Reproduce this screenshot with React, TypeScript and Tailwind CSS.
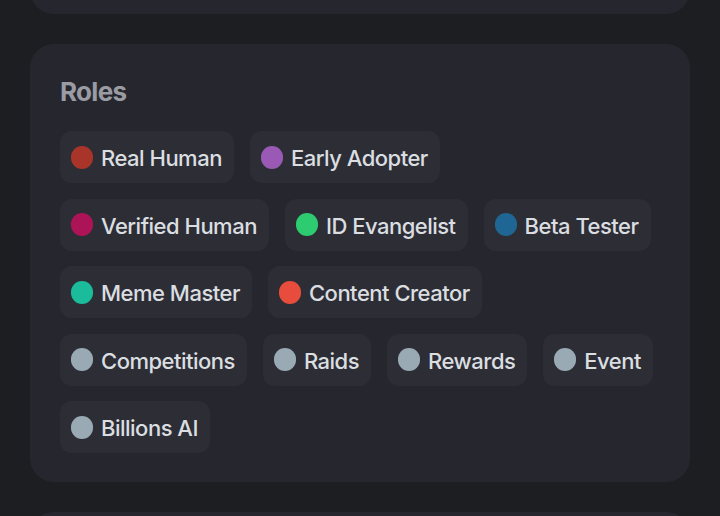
const roles = [
  { name: "Real Human", color: "bg-[#a8342a]" },
  { name: "Early Adopter", color: "bg-[#9b59b6]" },
  { name: "Verified Human", color: "bg-[#ad1457]" },
  { name: "ID Evangelist", color: "bg-[#2ecc71]" },
  { name: "Beta Tester", color: "bg-[#206694]" },
  { name: "Meme Master", color: "bg-[#1abc9c]" },
  { name: "Content Creator", color: "bg-[#e74c3c]" },
  { name: "Competitions", color: "bg-[#99aab5]" },
  { name: "Raids", color: "bg-[#99aab5]" },
  { name: "Rewards", color: "bg-[#99aab5]" },
  { name: "Event", color: "bg-[#99aab5]" },
  { name: "Billions AI", color: "bg-[#99aab5]" },
]

function RoleChip({ name, color }: { name: string; color: string }) {
  return (
    <div className="flex h-[52px] items-center gap-2 rounded-[12px] bg-[#2d2e35] pl-[11px] pr-3">
      <span className={`h-[23px] w-[22px] shrink-0 rounded-full ${color}`} />
      <span className="pt-[2px] text-[22px] font-medium leading-none tracking-[-0.5px] text-[#dbdee1]">
        {name}
      </span>
    </div>
  )
}

export default function App() {
  return (
    <div
      className="flex h-[516px] w-[720px] flex-col gap-[30px] overflow-hidden bg-[#1d1e22] px-[30px]"
      style={{ fontFamily: "Inter, 'Noto Sans', sans-serif" }}
    >
      <div className="-mt-[30px] h-[44px] shrink-0 rounded-b-[24px] bg-[#26272e]" />
      <section className="shrink-0 rounded-[24px] bg-[#26272e] px-[30px] pb-[29px] pt-[32px]">
        <h2 className="text-[26px] font-bold leading-[32px] tracking-[-0.7px] text-[#9a9ba3]">Roles</h2>
        <div className="mt-[23px] flex flex-wrap gap-x-4 gap-y-[15.5px]">
          {roles.map((r) => (
            <RoleChip key={r.name} name={r.name} color={r.color} />
          ))}
        </div>
      </section>
      <div className="h-[40px] shrink-0 rounded-t-[24px] bg-[#26272e]" />
    </div>
  )
}
